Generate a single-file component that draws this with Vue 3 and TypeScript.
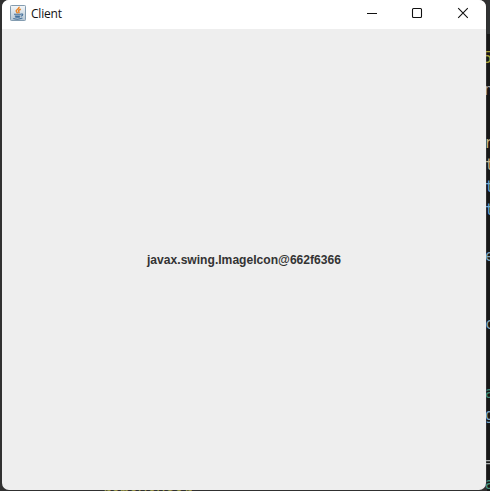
<script setup lang="ts">
interface Fragment { text: string; top: number; color: string; left?: number }

const fragments: Fragment[] = [
  { text: '5', top: 50, color: '#a8a13c', left: 483 },
  { text: 'n', top: 82, color: '#aaa69e', left: 484 },
  { text: 'r', top: 135, color: '#c9b989', left: 484 },
  { text: 't', top: 157, color: '#c9b58c' },
  { text: 't', top: 179, color: '#6fa9d2' },
  { text: 't', top: 202, color: '#6fa9d2' },
  { text: 'e', top: 248, color: '#7fa5bb' },
  { text: 'c', top: 316, color: '#86a6b8' },
  { text: 'a', top: 385, color: '#418b77' },
  { text: 'g', top: 407, color: '#7fa9c4' },
  { text: '=', top: 454, color: '#a9adad' },
  { text: 'a', top: 476, color: '#46947f' },
]
</script>

<template>
  <div class="desktop">
    <span
      v-for="(f, i) in fragments"
      :key="i"
      class="code"
      :style="{ top: f.top + 'px', left: (f.left ?? 485) + 'px', color: f.color }"
    >{{ f.text }}</span>
    <main class="window">
      <header class="titlebar">
        <svg class="app-icon" viewBox="0 0 16 16">
          <defs>
            <linearGradient id="tile" x1="0" y1="0" x2="0" y2="1">
              <stop offset="0" stop-color="#f5f8fa" />
              <stop offset="1" stop-color="#b4c5d3" />
            </linearGradient>
          </defs>
          <rect x=".5" y=".5" width="15" height="15" rx=".8" fill="url(#tile)" stroke="#839cb0" />
          <path d="M9 1.8C10 4 5.2 4.5 6.3 6.4L7.6 8.3M10.8 4.2C8 5.2 8.2 6 9.1 7.1L8.6 8.3" fill="none" stroke="#e88528" stroke-width="1.5" />
          <path d="M4 9.2H11M4.8 11H10.2M5.3 12.1H9.8M11 9.1C13.5 8.5 13.2 10.6 10.8 11.2M3.3 13.4C5.5 14.2 10 14.2 12.4 13.1" fill="none" stroke="#44709a" stroke-width="1.1" />
        </svg>
        <span class="title">Client</span>
        <nav class="controls">
          <svg class="minimize" viewBox="0 0 12 12"><path d="M1 6.5H11" /></svg>
          <svg viewBox="0 0 12 12"><rect x="1.5" y="1.5" width="9" height="9" rx="1" /></svg>
          <svg viewBox="0 0 12 12"><path d="M1.2 1.2L10.8 10.8M10.8 1.2L1.2 10.8" /></svg>
        </nav>
      </header>
      <section class="content">
        <svg class="label" viewBox="0 0 196 16">
          <text x="1" y="12" textLength="194" lengthAdjust="spacingAndGlyphs">javax.swing.ImageIcon@662f6366</text>
        </svg>
      </section>
    </main>
    <div class="lower-code">removeUser</div>
  </div>
</template>

<style>
body { margin: 0; overflow: hidden; }
</style>

<style scoped>
.desktop {
  position: relative;
  box-sizing: border-box;
  width: 490px;
  height: 491px;
  padding-left: 2px;
  overflow: hidden;
  background: linear-gradient(#303233 0 34px, #171717 34px);
}
.desktop::before {
  content: '';
  position: absolute;
  inset: 0 3px 0 0;
  background: #303030;
}
.code {
  position: absolute;
  font: 15px/17px "DejaVu Sans Mono", monospace;
}
.window {
  position: relative;
  width: 484px;
  height: 490px;
  border-radius: 7px;
  overflow: hidden;
  background: #eee;
}
.titlebar {
  display: flex;
  align-items: center;
  box-sizing: border-box;
  height: 29px;
  padding: 0 17px 3px 8px;
  background: #fff;
}
.app-icon { width: 16px; height: 16px; }
.title {
  margin: 2px 0 0 5px;
  color: #111;
  font: 12px/16px "Open Sans", sans-serif;
  letter-spacing: -.2px;
}
.controls {
  display: flex;
  gap: 34px;
  margin-left: auto;
}
.controls svg {
  width: 12px;
  height: 12px;
  fill: none;
  stroke: #111;
  stroke-width: 1.1;
}
.controls .minimize { margin-right: -1px; }
.content {
  display: flex;
  align-items: center;
  justify-content: center;
  height: 461px;
}
.label { width: 196px; height: 16px; }
.label text {
  fill: #333;
  font: bold 12px "Liberation Sans", sans-serif;
}
.lower-code {
  position: absolute;
  left: 102px;
  top: 490px;
  width: 90px;
  height: 1px;
  overflow: hidden;
  color: #9a9649;
  font: 15px/8px "DejaVu Sans Mono", monospace;
}
</style>
